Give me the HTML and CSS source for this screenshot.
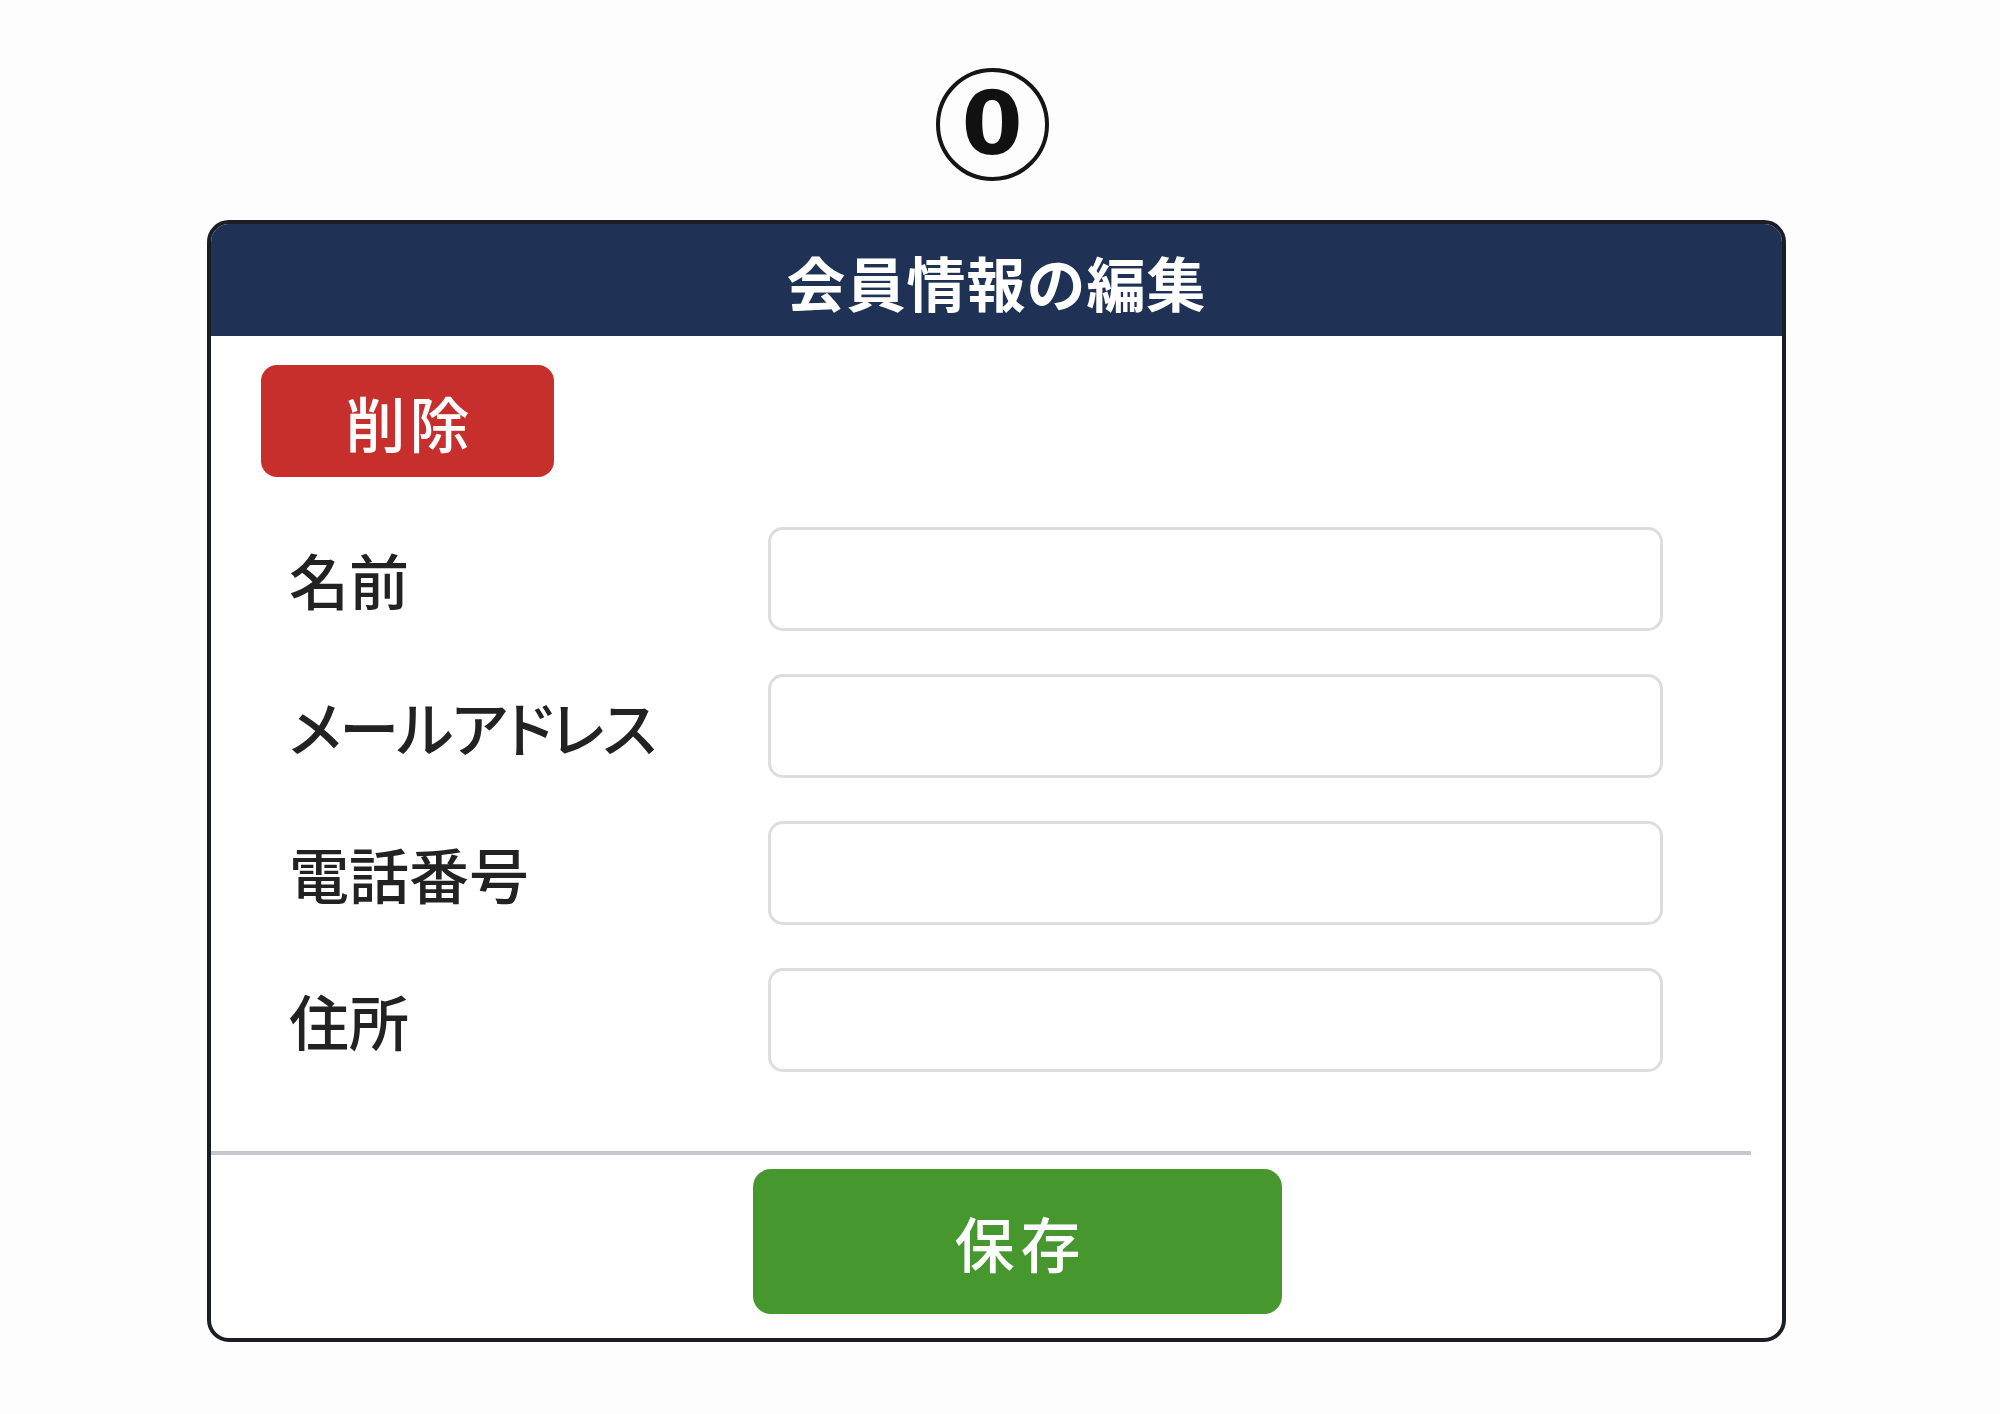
FILE: index.html
```html
<!DOCTYPE html>
<html lang="ja">
<head>
<meta charset="utf-8">
<title>会員情報の編集</title>
<link rel="stylesheet" href="styles.css">
</head>
<body>
<div class="page">
  <div class="step-wrap">
    <div class="step">0</div>
  </div>
  <div class="card">
    <div class="card-header">会員情報の編集</div>
    <div class="card-body">
      <button class="btn btn-delete" type="button">削除</button>
      <div class="form">
        <div class="row">
          <label class="label">名前</label>
          <div class="input"></div>
        </div>
        <div class="row">
          <label class="label label-kana">メールアドレス</label>
          <div class="input"></div>
        </div>
        <div class="row">
          <label class="label">電話番号</label>
          <div class="input"></div>
        </div>
        <div class="row">
          <label class="label">住所</label>
          <div class="input"></div>
        </div>
      </div>
    </div>
    <div class="divider"></div>
    <div class="card-footer">
      <button class="btn btn-save" type="button">保存</button>
    </div>
  </div>
</div>
</body>
</html>
```
FILE: styles.css
```css
* { box-sizing: border-box; }
html, body {
  margin: 0;
  padding: 0;
  background: #fdfdfd;
}
body {
  font-family: "Noto Sans CJK JP", "Noto Sans", sans-serif;
  width: 2000px;
  height: 1414px;
  overflow: hidden;
}
.page {
  padding-top: 68px;
  padding-left: 207px;
}
.step-wrap {
  width: 1579px;
  display: flex;
  justify-content: center;
  padding-right: 9px;
}
.step {
  width: 113px;
  height: 113px;
  border: 4px solid #151515;
  border-radius: 50%;
  display: flex;
  align-items: center;
  justify-content: center;
  font-family: "DejaVu Sans", sans-serif;
  font-weight: bold;
  font-size: 88px;
  line-height: 1;
  color: #111;
  padding-bottom: 2px;
}
.card {
  margin-top: 39px;
  width: 1579px;
  height: 1122px;
  border: 4px solid #1b1e25;
  border-radius: 22px;
  overflow: hidden;
  background: #fff;
  display: flex;
  flex-direction: column;
}
.card-header {
  height: 112px;
  flex: none;
  background: #1f3256;
  color: #fff;
  font-size: 59px;
  font-weight: bold;
  display: flex;
  align-items: center;
  justify-content: center;
  letter-spacing: 1px;
  padding-top: 2px;
}
.card-body {
  padding: 29px 0 0 50px;
}
.btn {
  border: none;
  color: #fff;
  font-family: "Noto Sans CJK JP", "Noto Sans", sans-serif;
  font-weight: 500;
  display: flex;
  align-items: center;
  justify-content: center;
  padding: 0;
  cursor: pointer;
}
.btn-delete {
  width: 293px;
  height: 112px;
  background: #c72f2c;
  border-radius: 16px;
  font-size: 60px;
  letter-spacing: 4px;
  padding-left: 4px;
}
.form {
  margin-top: 50px;
  padding-left: 28px;
  display: flex;
  flex-direction: column;
  gap: 43px;
}
.row {
  display: flex;
  align-items: center;
  height: 104px;
}
.label {
  width: 479px;
  flex: none;
  font-size: 60px;
  font-weight: 500;
  color: #222;
  font-feature-settings: "palt";
  line-height: 1;
}
.label-kana {
  letter-spacing: -1.7px;
}
.input {
  width: 895px;
  height: 104px;
  border: 3px solid #dddddd;
  border-radius: 15px;
  background: #fff;
}
.divider {
  margin-top: 79px;
  width: 1540px;
  height: 4px;
  background: #c6c8cf;
  flex: none;
}
.card-footer {
  padding: 14px 0 0 542px;
}
.btn-save {
  width: 529px;
  height: 145px;
  background: #46982e;
  border-radius: 18px;
  font-size: 60px;
  letter-spacing: 6px;
  padding-left: 6px;
}
```
